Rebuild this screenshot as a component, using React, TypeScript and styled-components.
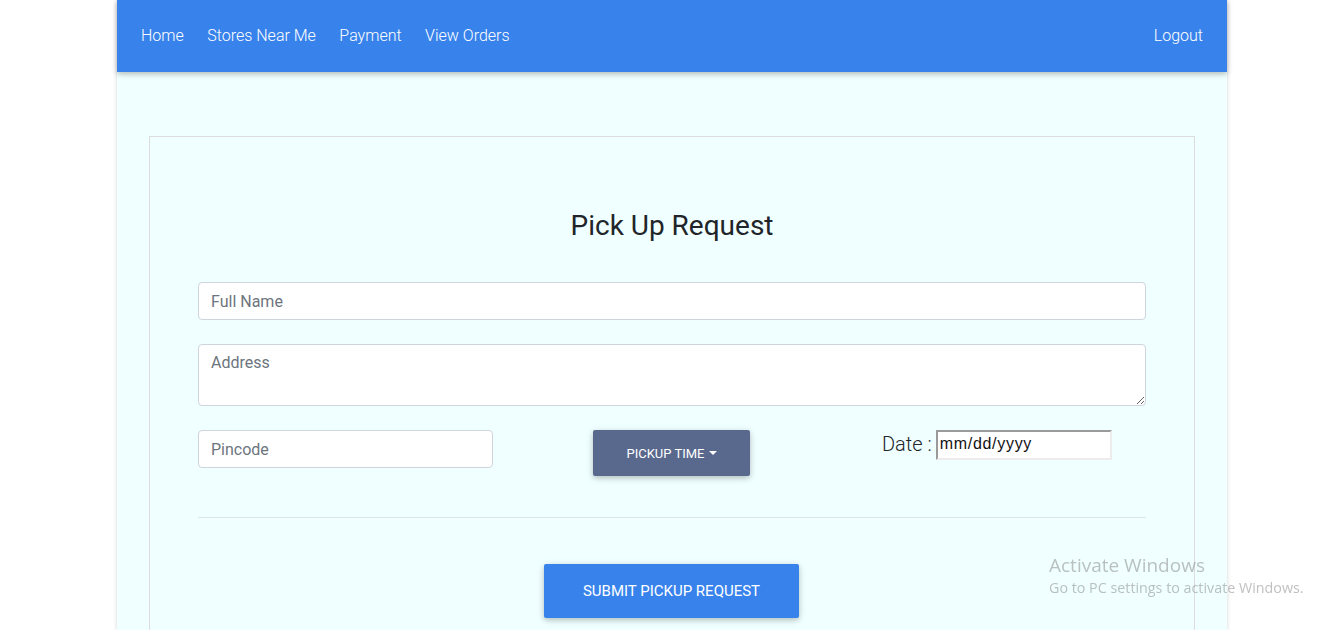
import React from "react";
import styled, { createGlobalStyle } from "styled-components";

const Global = createGlobalStyle`
  html, body { margin: 0; padding: 0; background: #ffffff; }
  body { font-family: Roboto, "Noto Sans", Arial, sans-serif; }
  * { box-sizing: border-box; }
`;

const Page = styled.div`
  width: 1110px;
  margin: 0 auto;
  min-height: 630px;
  background: #f0ffff;
  box-shadow: 0 0 4px rgba(0, 0, 0, 0.18);
  display: flex;
  flex-direction: column;
`;

const NavBar = styled.nav`
  height: 72px;
  background: #3883eb;
  display: flex;
  align-items: center;
  justify-content: space-between;
  padding: 0 24px;
  box-shadow: 0 2px 5px rgba(0, 0, 0, 0.18), 0 2px 8px rgba(0, 0, 0, 0.1);
  position: relative;
  z-index: 1;
`;

const NavGroup = styled.div`
  display: flex;
  gap: 23.5px;
`;

const NavLink = styled.a`
  color: #ffffff;
  font-size: 16px;
  font-weight: 300;
  text-decoration: none;
  line-height: 20px;
`;

const Main = styled.main`
  padding: 64px 32px 0;
  flex: 1;
  display: flex;
  flex-direction: column;
`;

const Card = styled.section`
  border: 1px solid #dcdcdc;
  border-bottom: none;
  padding: 72px 48px 0;
  flex: 1;
`;

const Title = styled.h3`
  margin: 0 0 39px;
  text-align: center;
  font-size: 28px;
  font-weight: 400;
  line-height: 34px;
  color: #212529;
`;

const TextInput = styled.input<{ $width?: number }>`
  display: block;
  width: ${(p) => (p.$width ? `${p.$width}px` : "100%")};
  height: 38px;
  padding: 6px 12px;
  border: 1px solid #ced4da;
  border-radius: 4px;
  background: #fff;
  font-family: Roboto, sans-serif;
  font-size: 16px;
  color: #495057;
  &::placeholder { color: #6c757d; }
`;

const TextArea = styled.textarea`
  display: block;
  width: 100%;
  height: 62px;
  padding: 6px 12px;
  border: 1px solid #ced4da;
  border-radius: 4px;
  background: #fff;
  font-family: Roboto, sans-serif;
  font-size: 16px;
  line-height: 24px;
  color: #495057;
  &::placeholder { color: #6c757d; }
`;

const Field = styled.div`
  margin-bottom: 24px;
`;

const Row = styled.div`
  display: grid;
  grid-template-columns: 1fr 1fr 1fr;
  align-items: start;
`;

const Cell = styled.div<{ $align: string }>`
  display: flex;
  justify-content: ${(p) => p.$align};
`;

const DropButton = styled.button`
  height: 46px;
  width: 157px;
  margin-right: 1px;
  padding: 0;
  justify-content: center;
  background: #59698d;
  color: #fff;
  border: none;
  border-radius: 2px;
  font-family: Roboto, sans-serif;
  font-size: 13px;
  font-weight: 400;
  text-transform: uppercase;
  display: flex;
  align-items: center;
  gap: 4px;
  box-shadow: 0 2px 5px rgba(0, 0, 0, 0.16), 0 2px 10px rgba(0, 0, 0, 0.12);
`;

const Caret = styled.span`
  width: 0;
  height: 0;
  border-left: 4px solid transparent;
  border-right: 4px solid transparent;
  border-top: 4px solid #fff;
  margin-top: -1px;
`;

const DateGroup = styled.div`
  display: flex;
  align-items: center;
  gap: 4px;
  margin-left: 52px;
`;

const DateLabel = styled.label`
  font-size: 20px;
  font-weight: 300;
  color: #212529;
  margin-top: -2px;
`;

const DateBox = styled.div`
  width: 176px;
  height: 30px;
  background: #fff;
  border: 2px solid;
  border-color: #9a9a9a #ececec #ececec #9a9a9a;
  font-family: "Liberation Sans", Arial, sans-serif;
  font-size: 16px;
  letter-spacing: 0.7px;
  color: #111;
  padding: 3px 2px 0;
`;

const Divider = styled.hr`
  border: none;
  border-top: 1px solid #dde4e6;
  margin: 41px 0 46px;
`;

const SubmitRow = styled.div`
  display: flex;
  justify-content: center;
`;

const SubmitButton = styled.button`
  height: 54px;
  width: 255px;
  margin-right: 1px;
  padding: 0;
  background: #3883eb;
  color: #fff;
  border: none;
  border-radius: 2px;
  font-family: Roboto, sans-serif;
  font-size: 15px;
  font-weight: 400;
  text-transform: uppercase;
  box-shadow: 0 2px 5px rgba(0, 0, 0, 0.16), 0 2px 10px rgba(0, 0, 0, 0.12);
`;

const Watermark = styled.div`
  position: fixed;
  left: 1049px;
  top: 553px;
  color: rgba(140, 140, 140, 0.55);
  font-family: "Open Sans", "Noto Sans", sans-serif;
  pointer-events: none;
`;

const WmTitle = styled.div`
  font-size: 19px;
  line-height: 24px;
`;

const WmSub = styled.div`
  font-size: 14.3px;
  line-height: 21px;
`;

export default function App() {
  return (
    <>
      <Global />
      <Page>
        <NavBar>
          <NavGroup>
            <NavLink href="#">Home</NavLink>
            <NavLink href="#">Stores Near Me</NavLink>
            <NavLink href="#">Payment</NavLink>
            <NavLink href="#">View Orders</NavLink>
          </NavGroup>
          <NavLink href="#">Logout</NavLink>
        </NavBar>
        <Main>
          <Card>
            <Title>Pick Up Request</Title>
            <Field>
              <TextInput placeholder="Full Name" />
            </Field>
            <Field>
              <TextArea placeholder="Address" />
            </Field>
            <Row>
              <Cell $align="flex-start">
                <TextInput $width={295} placeholder="Pincode" />
              </Cell>
              <Cell $align="center">
                <DropButton>
                  Pickup Time <Caret />
                </DropButton>
              </Cell>
              <Cell $align="flex-start">
                <DateGroup>
                  <DateLabel>Date :</DateLabel>
                  <DateBox>mm/dd/yyyy</DateBox>
                </DateGroup>
              </Cell>
            </Row>
            <Divider />
            <SubmitRow>
              <SubmitButton>Submit Pickup Request</SubmitButton>
            </SubmitRow>
          </Card>
        </Main>
      </Page>
      <Watermark>
        <WmTitle>Activate Windows</WmTitle>
        <WmSub>Go to PC settings to activate Windows.</WmSub>
      </Watermark>
    </>
  );
}
